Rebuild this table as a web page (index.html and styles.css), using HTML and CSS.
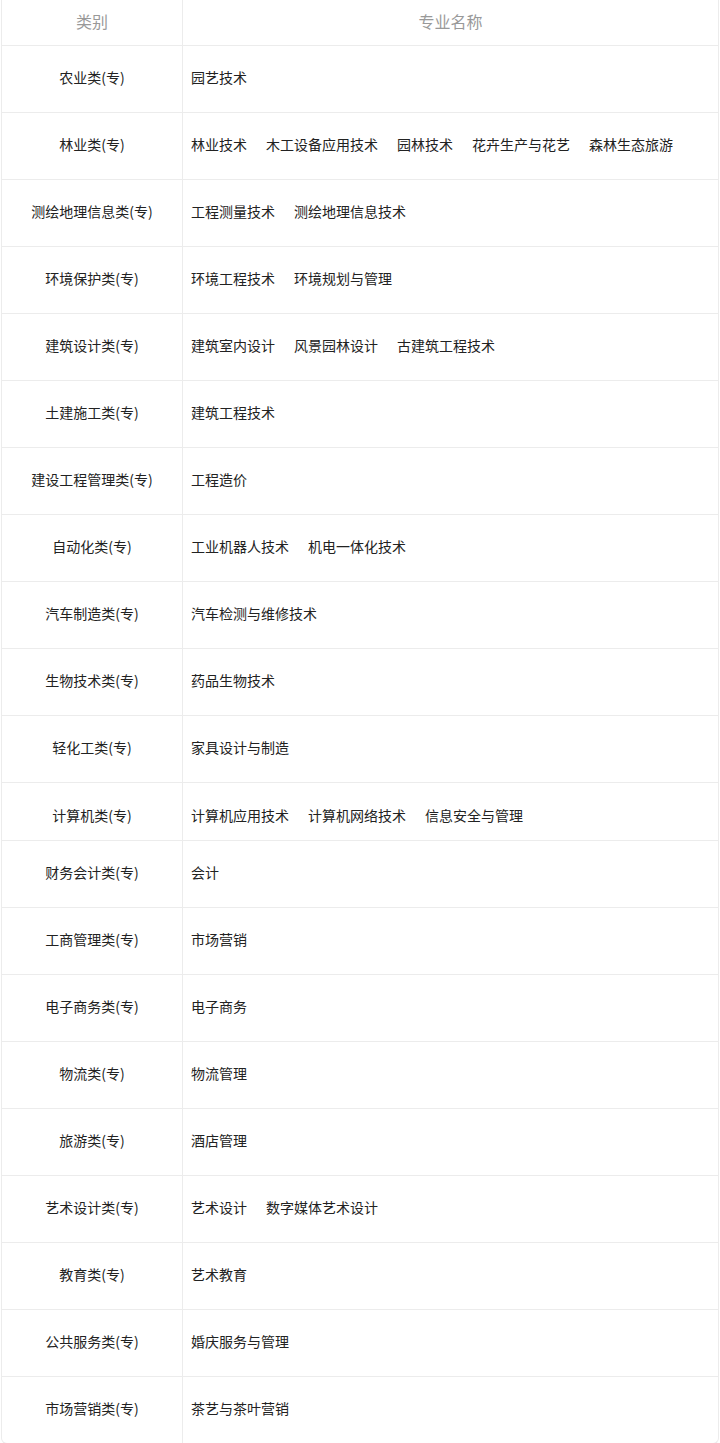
FILE: index.html
```html
<!DOCTYPE html>
<html lang="zh-CN">
<head>
<meta charset="utf-8">
<title>专业</title>
<link rel="stylesheet" href="styles.css">
</head>
<body>
<div class="table">
  <div class="row head"><div class="cat">类别</div><div class="majors center">专业名称</div></div>
  <div class="row"><div class="cat">农业类(专)</div><div class="majors"><span>园艺技术</span></div></div>
  <div class="row"><div class="cat">林业类(专)</div><div class="majors"><span>林业技术</span><span>木工设备应用技术</span><span>园林技术</span><span>花卉生产与花艺</span><span>森林生态旅游</span></div></div>
  <div class="row"><div class="cat">测绘地理信息类(专)</div><div class="majors"><span>工程测量技术</span><span>测绘地理信息技术</span></div></div>
  <div class="row"><div class="cat">环境保护类(专)</div><div class="majors"><span>环境工程技术</span><span>环境规划与管理</span></div></div>
  <div class="row"><div class="cat">建筑设计类(专)</div><div class="majors"><span>建筑室内设计</span><span>风景园林设计</span><span>古建筑工程技术</span></div></div>
  <div class="row"><div class="cat">土建施工类(专)</div><div class="majors"><span>建筑工程技术</span></div></div>
  <div class="row"><div class="cat">建设工程管理类(专)</div><div class="majors"><span>工程造价</span></div></div>
  <div class="row"><div class="cat">自动化类(专)</div><div class="majors"><span>工业机器人技术</span><span>机电一体化技术</span></div></div>
  <div class="row"><div class="cat">汽车制造类(专)</div><div class="majors"><span>汽车检测与维修技术</span></div></div>
  <div class="row"><div class="cat">生物技术类(专)</div><div class="majors"><span>药品生物技术</span></div></div>
  <div class="row"><div class="cat">轻化工类(专)</div><div class="majors"><span>家具设计与制造</span></div></div>
  <div class="row short"><div class="cat">计算机类(专)</div><div class="majors"><span>计算机应用技术</span><span>计算机网络技术</span><span>信息安全与管理</span></div></div>
  <div class="row"><div class="cat">财务会计类(专)</div><div class="majors"><span>会计</span></div></div>
  <div class="row"><div class="cat">工商管理类(专)</div><div class="majors"><span>市场营销</span></div></div>
  <div class="row"><div class="cat">电子商务类(专)</div><div class="majors"><span>电子商务</span></div></div>
  <div class="row"><div class="cat">物流类(专)</div><div class="majors"><span>物流管理</span></div></div>
  <div class="row"><div class="cat">旅游类(专)</div><div class="majors"><span>酒店管理</span></div></div>
  <div class="row"><div class="cat">艺术设计类(专)</div><div class="majors"><span>艺术设计</span><span>数字媒体艺术设计</span></div></div>
  <div class="row"><div class="cat">教育类(专)</div><div class="majors"><span>艺术教育</span></div></div>
  <div class="row"><div class="cat">公共服务类(专)</div><div class="majors"><span>婚庆服务与管理</span></div></div>
  <div class="row"><div class="cat">市场营销类(专)</div><div class="majors"><span>茶艺与茶叶营销</span></div></div>
</div>
</body>
</html>
```
FILE: styles.css
```css
html, body {
  margin: 0;
  padding: 0;
  background: #fff;
}
body {
  font-family: "Noto Sans CJK SC", "Noto Sans", sans-serif;
  font-size: 14px;
  color: #222;
}
.table {
  margin: 0 1px;
  border: 1px solid #ececec;
  border-top: none;
  border-radius: 0 0 6px 6px;
  overflow: hidden;
}
.row {
  display: flex;
  height: 66px;
  border-top: 1px solid #ececec;
}
.row > div {
  box-sizing: border-box;
  padding-bottom: 4px;
}
.row.head {
  height: 45px;
  border-top: none;
  color: #999;
  font-size: 16px;
}
.row.short {
  height: 57px;
}
.row.short > div {
  padding-bottom: 0;
  padding-top: 7px;
}
.cat {
  width: 181px;
  flex: none;
  border-right: 1px solid #ececec;
  display: flex;
  align-items: center;
  justify-content: center;
  white-space: nowrap;
}
.majors {
  flex: 1;
  display: flex;
  align-items: center;
  gap: 19px;
  padding-left: 8px;
  white-space: nowrap;
}
.majors.center {
  justify-content: center;
  padding-left: 0;
}
```
